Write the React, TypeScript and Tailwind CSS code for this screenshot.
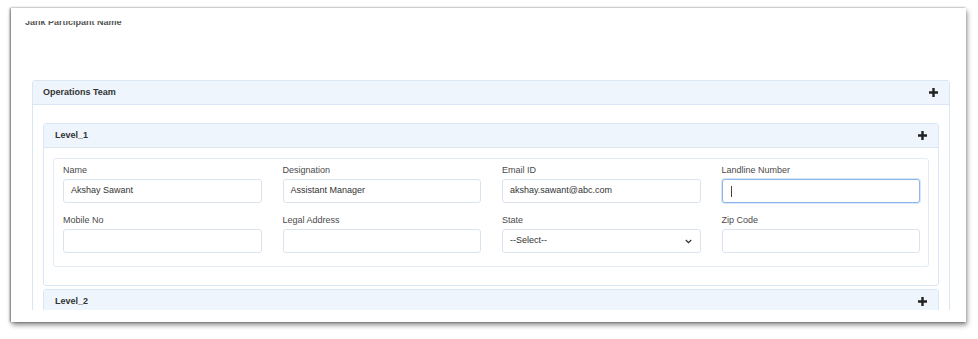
import React from 'react';

const Plus = () => (
  <svg width="9" height="9" viewBox="0 0 9 9" className="shrink-0">
    <path d="M3.3 0h2.4v3.3H9v2.4H5.7V9H3.3V5.7H0V3.3h3.3z" fill="#222" />
  </svg>
);

const Chevron = () => (
  <svg width="7" height="5" viewBox="0 0 7 5" className="shrink-0">
    <path d="M0.8 1l2.7 2.6L6.2 1" fill="none" stroke="#333" strokeWidth="1.3" />
  </svg>
);

const inputCls =
  'h-[24px] w-full border border-[#dbe3ee] rounded-[3px] bg-white px-[7px] text-[9px] text-[#333] flex items-center';

const Field = ({ label, children }: { label: string; children: React.ReactNode }) => (
  <div className="flex flex-col min-w-0">
    <div className="leading-[12px] mb-[3px] text-[9px] text-[#4a4a4a]">{label}</div>
    {children}
  </div>
);

const Header = ({ title, pl }: { title: string; pl: string }) => (
  <div className={`h-[24px] border-b border-[#d9e6f4] bg-[#eef5fd] flex items-center justify-between pr-[11px] ${pl}`}>
    <span className="text-[9px] font-bold text-[#333]">{title}</span>
    <Plus />
  </div>
);

const App = () => {
  return (
    <div
      className="w-[978px] h-[339px] bg-white pt-[8px] pl-[11px]"
      style={{ fontFamily: '"Liberation Sans", Arial, sans-serif' }}
    >
      <div className="w-[955px] h-[314px] bg-white pt-[13px] shadow-[1px_3px_5px_rgba(0,0,0,0.45),-1px_0_2px_rgba(0,0,0,0.5)]">
        <div className="h-[289px] overflow-hidden pl-[14px]">
          {/* heading scrolled partly out of view, as in the capture */}
          <div className="-mt-[5px] leading-[12px] text-[9px] font-semibold text-[#555]">Jank Participant Name</div>

          <div className="mt-[52px] ml-[7px] w-[918px] border border-[#d9e6f4] rounded-[3px]">
            <Header title="Operations Team" pl="pl-[10px]" />
            <div className="pt-[18px] px-[10px]">
              <div className="border border-[#d9e6f4] rounded-[3px]">
                <Header title="Level_1" pl="pl-[11px]" />
                <div className="pt-[10px] px-[9px] pb-[18px]">
                  <div className="border border-[#e3ebf5] rounded-[3px] pl-[9px] pr-[8px] pt-[5px] pb-[13px] grid grid-cols-4 gap-x-[21px] gap-y-[11px]">
                    <Field label="Name">
                      <div className={inputCls}>Akshay Sawant</div>
                    </Field>
                    <Field label="Designation">
                      <div className={inputCls}>Assistant Manager</div>
                    </Field>
                    <Field label="Email ID">
                      <div className={inputCls}>akshay.sawant@abc.com</div>
                    </Field>
                    <Field label="Landline Number">
                      <div className="h-[24px] w-full border border-[#8db7ea] rounded-[3px] bg-white px-[8px] flex items-center shadow-[0_0_0_1px_rgba(140,183,234,0.35)]">
                        <span className="w-px h-[11px] bg-[#444]" />
                      </div>
                    </Field>
                    <Field label="Mobile No">
                      <div className={inputCls} />
                    </Field>
                    <Field label="Legal Address">
                      <div className={inputCls} />
                    </Field>
                    <Field label="State">
                      <div className={`${inputCls} justify-between pr-[8px]`}>
                        <span>--Select--</span>
                        <Chevron />
                      </div>
                    </Field>
                    <Field label="Zip Code">
                      <div className={inputCls} />
                    </Field>
                  </div>
                </div>
              </div>

              <div className="mt-[3px] border border-[#d9e6f4] rounded-[3px]">
                <Header title="Level_2" pl="pl-[11px]" />
                <div className="h-[40px]" />
              </div>
            </div>
          </div>
        </div>
      </div>
    </div>
  );
};

export default App;
